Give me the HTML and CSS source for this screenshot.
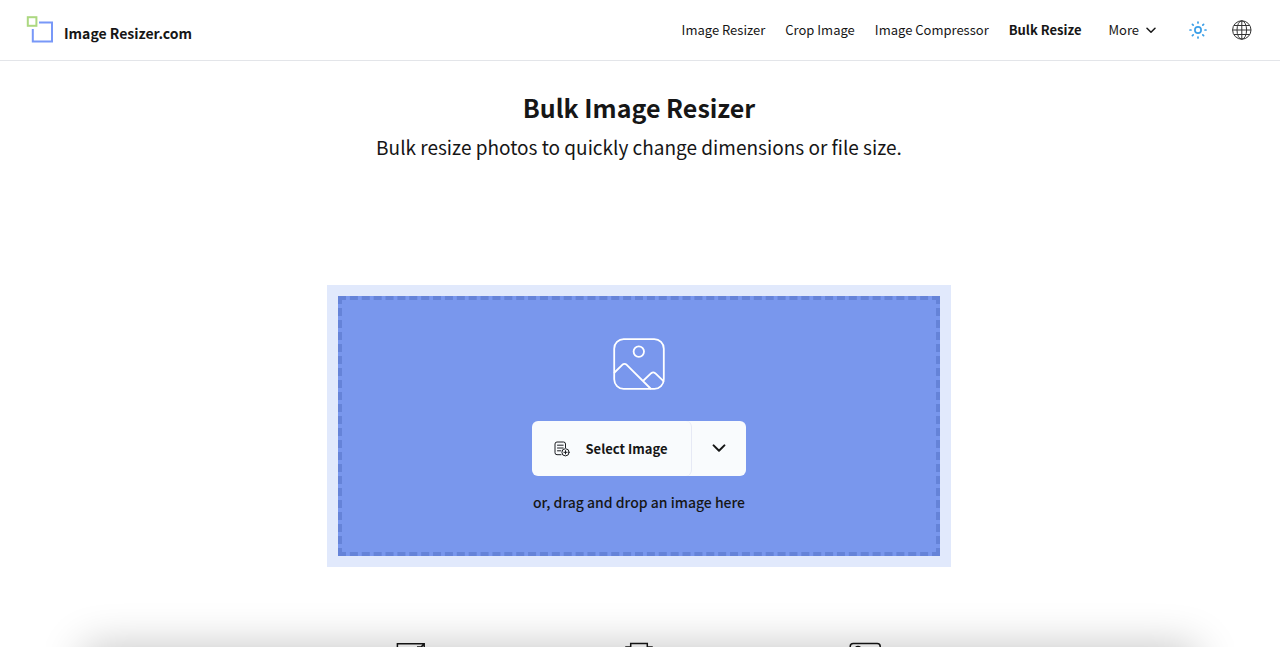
FILE: index.html
```html
<!DOCTYPE html>
<html lang="en">
<head>
<meta charset="utf-8">
<meta name="viewport" content="width=device-width, initial-scale=1">
<title>Bulk Image Resizer</title>
<link rel="stylesheet" href="styles.css">
</head>
<body>
<header class="site-header">
  <a class="brand" href="#">
    <svg class="brand-logo" width="28" height="28" viewBox="0 0 28 28" fill="none" aria-hidden="true">
      <path d="M13 6.6H26V25.6H6.8V13" stroke="#7898f8" stroke-width="2"/>
      <rect x="1.8" y="1.2" width="8.6" height="8.6" stroke="#acd881" stroke-width="2"/>
    </svg>
    <span class="brand-name">Image Resizer.com</span>
  </a>
  <nav class="site-nav">
    <div class="nav-links">
      <a class="nav-link" href="#">Image Resizer</a>
      <a class="nav-link" href="#">Crop Image</a>
      <a class="nav-link" href="#">Image Compressor</a>
      <a class="nav-link nav-current" href="#">Bulk Resize</a>
    </div>
    <button class="nav-more" type="button">More
      <svg width="10" height="7" viewBox="0 0 10 7" fill="none" stroke="currentColor" stroke-width="1.5" stroke-linecap="round" stroke-linejoin="round" aria-hidden="true"><path d="M1 1.2l4 4 4-4"/></svg>
    </button>
    <button class="icon-button theme" type="button" aria-label="Toggle theme">
      <svg width="18" height="18" viewBox="0 0 18 18" fill="none" stroke="#3b9fe8" stroke-width="1.7" stroke-linecap="round" aria-hidden="true">
        <circle cx="9" cy="9" r="3.1"/>
        <path d="M9 1v1M9 16v1M1 9h1M16 9h1M3.4 3.4l.8.8M13.8 13.8l.8.8M3.4 14.6l.8-.8M13.8 4.2l.8-.8"/>
      </svg>
    </button>
    <button class="icon-button" type="button" aria-label="Language">
      <svg width="20" height="20" viewBox="0 0 20 20" fill="none" stroke="#333" stroke-width="1" aria-hidden="true">
        <circle cx="9.8" cy="10" r="9.2"/>
        <ellipse cx="9.8" cy="10" rx="4.8" ry="9.2"/>
        <path d="M9.8.8v18.4M.6 10H19M2 5.5h15.6M2 14.5h15.6"/>
      </svg>
    </button>
  </nav>
</header>
<main class="page">
  <h1 class="title">Bulk Image Resizer</h1>
  <p class="subtitle">Bulk resize photos to quickly change dimensions or file size.</p>
  <section class="uploader">
    <div class="dropzone">
      <svg width="52" height="52" viewBox="0 0 52 52" fill="none" stroke="#fff" stroke-width="1.8" stroke-linecap="round" stroke-linejoin="round" aria-hidden="true">
        <rect x="1.2" y="1.2" width="49.6" height="49.6" rx="9.5"/>
        <circle cx="25.8" cy="13.6" r="5.2"/>
        <path d="M1.5 34.5l7.8-7.7q2.2-1.8 4.4 0L37.5 50.5M30.5 42.5l7.7-7.3q2-1.7 4 0l8.3 8"/>
      </svg>
      <div class="select-group">
        <button class="select-main" type="button">
          <svg width="16" height="16" viewBox="0 0 16 16" fill="none" stroke="#1b1c20" stroke-width="1" stroke-linecap="round" aria-hidden="true">
            <path d="M7 13.7H3a2 2 0 0 1-2-2V3a2 2 0 0 1 2-2h6.5a2 2 0 0 1 2 2v3.6M3.5 4.2h5.7M3.5 7h5.7M3.5 9.8h3.4"/>
            <circle cx="11.5" cy="11.3" r="3.6"/>
            <path d="M11.5 9.7v3.2M9.9 11.3h3.2"/>
          </svg>
          Select Image
        </button>
        <button class="select-more" type="button" aria-label="More sources">
          <svg width="14" height="9" viewBox="0 0 14 9" fill="none" stroke="currentColor" stroke-width="2" stroke-linecap="round" stroke-linejoin="round" aria-hidden="true"><path d="M1.6 1.4L7 6.8l5.4-5.4"/></svg>
        </button>
      </div>
      <p class="drop-hint">or, drag and drop an image here</p>
    </div>
  </section>
  <section class="features">
    <svg width="34" height="34" viewBox="0 0 34 34" fill="none" stroke="#161616" stroke-width="1.5" aria-hidden="true">
      <path d="M2.4 1.8h26.8v27H2.4zM29 2l-9 9M22 5h5v5"/>
    </svg>
    <svg width="34" height="34" viewBox="0 0 34 34" fill="none" stroke="#161616" stroke-width="1.5" aria-hidden="true">
      <path d="M8.7 5V1.4h16.6V5M9 5H4v20h26V5h-5"/>
    </svg>
    <svg width="34" height="34" viewBox="0 0 34 34" fill="none" stroke="#161616" stroke-width="1.5" aria-hidden="true">
      <rect x="1.2" y="1.4" width="30" height="28" rx="3"/><circle cx="9" cy="7" r="2.5"/>
    </svg>
  </section>
</main>
<div class="bottom-sheet"></div>
</body>
</html>
```
FILE: styles.css
```css
* { box-sizing: border-box; }
body {
  margin: 0;
  min-height: 100vh;
  overflow: hidden;
  background: #fff;
  color: #161616;
  font-family: "Noto Sans CJK SC", "Noto Sans", sans-serif;
}
button {
  padding: 0;
  border: 0;
  background: none;
  color: inherit;
  font: inherit;
  cursor: pointer;
}
svg { display: block; }
.site-header {
  display: flex;
  align-items: center;
  justify-content: space-between;
  height: 61px;
  padding: 0 28px 0 26px;
  border-bottom: 1px solid #e3e5e9;
}
.brand {
  display: flex;
  align-items: center;
  gap: 10px;
  color: inherit;
  text-decoration: none;
}
.brand-name {
  padding-top: 6px;
  font-size: 14px;
  font-weight: 700;
  line-height: 20px;
}
.site-nav {
  display: flex;
  align-items: center;
  gap: 23px;
  font-size: 13px;
  line-height: 20px;
}
.nav-links { display: flex; gap: 20px; }
.nav-link { color: inherit; text-decoration: none; }
.nav-current { font-weight: 700; }
.nav-more {
  display: flex;
  align-items: center;
  gap: 7px;
  padding: 0 10px 0 4px;
}
.icon-button { display: block; }
.theme { margin-right: 2px; }
.page { padding: 27px 2px 0 0; text-align: center; }
.title {
  margin: 0;
  font-size: 25px;
  font-weight: 700;
  line-height: 38px;
}
.subtitle {
  margin: 6px 0 0;
  font-size: 19px;
  line-height: 30px;
}
.uploader {
  max-width: 624px;
  margin: 123px auto 0;
  padding: 11px;
  background: #e1e9fc;
}
.dropzone {
  display: flex;
  flex-direction: column;
  align-items: center;
  padding: 38px 16px 40px;
  border: 4px dashed #6583d8;
  background: #7997ed;
}
.select-group {
  display: flex;
  height: 55px;
  margin-top: 31px;
  overflow: hidden;
  border-radius: 6px;
  background: #f9fbfd;
}
.select-main {
  display: flex;
  align-items: center;
  gap: 15px;
  padding: 0 23px 0 22px;
  border-right: 1px solid #e6e9f5;
  border-radius: 6px;
  font-size: 13px;
  font-weight: 700;
}
.select-more {
  display: flex;
  align-items: center;
  justify-content: center;
  width: 54px;
}
.drop-hint {
  margin: 16px 0 0;
  font-size: 14px;
  font-weight: 500;
  line-height: 20px;
}
.features {
  display: flex;
  justify-content: center;
  gap: 193px;
  margin-top: 75px;
}
.bottom-sheet {
  position: fixed;
  top: 100%;
  right: 84px;
  left: 84px;
  height: 100px;
  box-shadow: 0 0 44px rgba(0, 0, 0, 0.24);
}
```
